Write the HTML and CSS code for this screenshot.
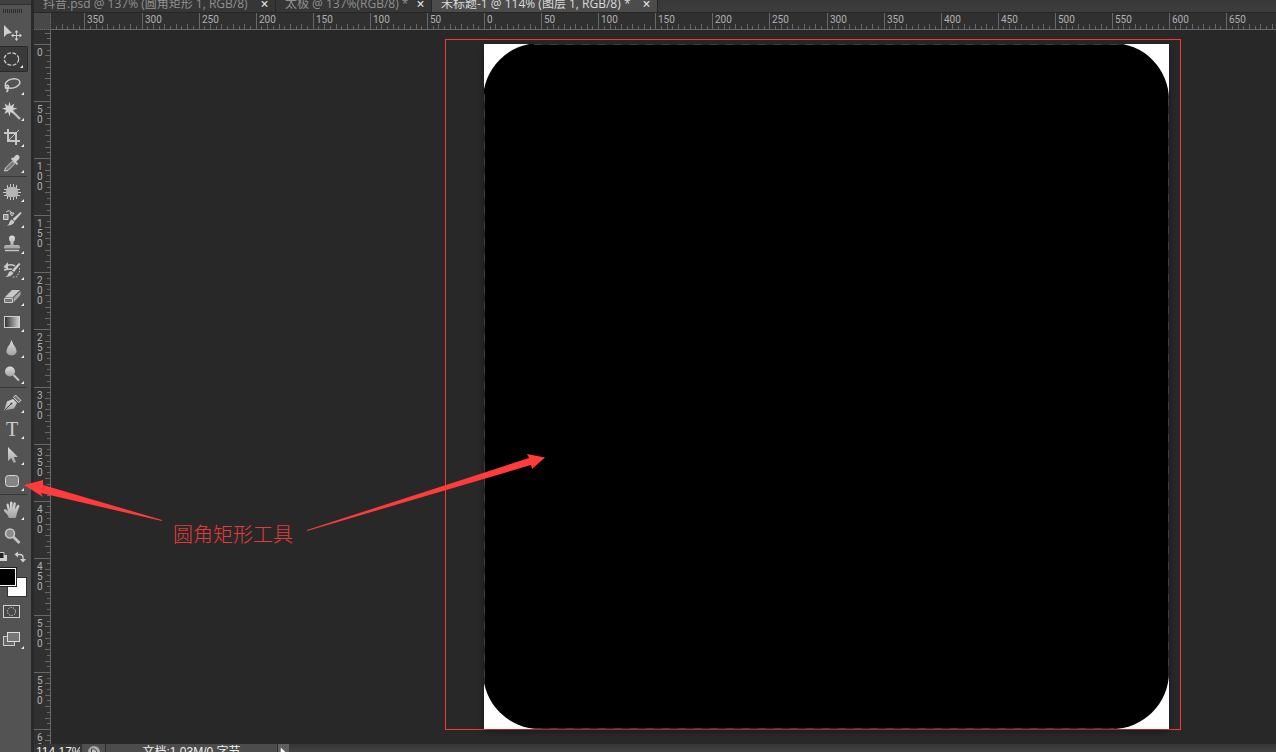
FILE: index.html
```html
<!DOCTYPE html>
<html lang="zh-CN">
<head>
    <meta charset="UTF-8">
    <meta name="viewport" content="width=device-width, initial-scale=1.0">
    <title>未标题-1</title>
    <link rel="stylesheet" href="styles.css">
</head>
<body>

<!-- Shared gradients for the tool icons -->
<svg class="defs" aria-hidden="true">
    <defs>
        <linearGradient id="metal" x1="0" y1="0" x2="0" y2="1">
            <stop offset="0" stop-color="#dedede"/>
            <stop offset="1" stop-color="#a2a2a2"/>
        </linearGradient>
        <linearGradient id="ramp" x1="0" y1="0" x2="1" y2="0">
            <stop offset="0" stop-color="#2c2c2c"/>
            <stop offset="1" stop-color="#d4d4d4"/>
        </linearGradient>
    </defs>
</svg>

<div class="app">
    <!-- Toolbar -->
    <aside class="toolbar">
        <div class="toolbar-head"></div>
        <div class="grip"></div>
        <div class="tool-group">
            <button class="tool plain" aria-label="移动工具"><svg viewBox="0 0 24 24"><path d="M4 4v12l3-3 5-1z" fill="#cfcfcf"/><path d="M16.500 10v9M12 14.500h9" stroke="#cfcfcf"/><path d="M16.500 9l-2 2.500h4zM16.500 20l-2-2.500h4zM11 14.500l2.500-2v4zM22 14.500l-2.500-2v4z" fill="#cfcfcf"/></svg></button>
            <button class="tool selected" aria-label="椭圆选框工具"><svg viewBox="0 0 24 24"><ellipse cx="12" cy="12" rx="7.500" ry="6.500" fill="none" stroke="#d0d0d0" stroke-width="1.300" stroke-dasharray="4 1.600"/></svg></button>
            <button class="tool" aria-label="套索工具"><svg viewBox="0 0 24 24"><g fill="none" stroke="#cdcdcd" stroke-width="1.500"><ellipse cx="12.500" cy="10.500" rx="7.500" ry="4.500" transform="rotate(-14 12.500 10.500)"/><circle cx="7" cy="14" r="1.700"/><path d="M7.500 15.500q1 2-1 3.500"/></g></svg></button>
            <button class="tool" aria-label="魔棒工具"><svg viewBox="0 0 24 24"><path d="M11 11l9 9" stroke="#bcbcbc" stroke-width="2.400"/><path d="M9.500 2.500l1.200 4.500 3.800-2.500-1.500 4 4.500 1-4.500 1.500 1.500 4-4-2-1 4.500-1.400-4.500-3.600 2 1.500-4-4-1.500 4-1-1.500-4 3.800 2.500z" fill="#d2d2d2"/></svg></button>
            <button class="tool" aria-label="裁剪工具"><svg viewBox="0 0 24 24"><path d="M8 4v12h12M4 8h12v12" fill="none" stroke="#c6c6c6" stroke-width="2"/><path d="M8 16L19 5" stroke="#c6c6c6"/></svg></button>
            <button class="tool" aria-label="吸管工具"><svg viewBox="0 0 24 24"><path d="M4.500 20l1-3 7-7 2.500 2.500-7 7z" fill="#777" stroke="#d0d0d0"/><path d="M11 8l6 6 1.200-1.200-2-2 2.800-2.800q1.500-2-.2-3.400-1.600-1.500-3.300 0l-2.600 2.700-1-.7z" fill="#cdcdcd"/></svg></button>
        </div>
        <div class="tool-group">
            <button class="tool" aria-label="修补工具"><svg viewBox="0 0 24 24"><path d="M7.500 5v14M10.500 4v16M13.500 4v16M16.500 5v14M4 9.500h16M3 12.500h18M4 15.500h16" stroke="#c8c8c8"/><rect x="6" y="7" width="12" height="10" rx="4" fill="#b5b5b5"/></svg></button>
            <button class="tool" aria-label="画笔工具"><svg viewBox="0 0 24 24"><path d="M20.500 6l1.200 1-7 8-2-2z" fill="#d0d0d0"/><path d="M12 13.500l2.500 2.200q-1.500 4-7.500 3.800 2.500-1 2.500-3.500 1-2.500 2.500-2.500z" fill="#c8c8c8"/><path d="M3.500 8.500h4.500v5h-4.500z" fill="#8b8b8b" stroke="#d5d5d5"/><path d="M6 6q4-3 6 1.500M10 7h4l-2 3z" fill="none" stroke="#cfcfcf"/></svg></button>
            <button class="tool" aria-label="仿制图章工具"><svg viewBox="0 0 24 24"><path d="M9 6.500a3 3 0 0 1 6 0q0 2-1.500 3.500v3H18q2 0 2 2v1.500H4V15q0-2 2-2h4.500v-3Q9 8.500 9 6.500z" fill="url(#metal)"/><path d="M5 18.500h14" stroke="#c5c5c5" stroke-width="1.500"/></svg></button>
            <button class="tool" aria-label="历史记录画笔工具"><svg viewBox="0 0 24 24"><path d="M19 5l1.500 1-6.500 8-2.200-1.800z" fill="#d0d0d0"/><path d="M11 13l2.500 2q-2 4-8.500 4 3-1 3-3 1-3 3-3z" fill="#c8c8c8"/><path d="M5 8.500q5-3 10-.5M4 12q4-1 8-1" fill="none" stroke="#c8c8c8" stroke-width="1.500"/><path d="M8 4v8L3.500 9z" fill="#c8c8c8"/><path d="M19.500 10v4l-3 5h-4" fill="none" stroke="#c8c8c8" stroke-dasharray="1.500 1.500"/></svg></button>
            <button class="tool" aria-label="橡皮擦工具"><svg viewBox="0 0 24 24"><path d="M4.500 13.500L12 6h8l-7.500 7.500z" fill="#c9c9c9"/><path d="M4.500 14.500h8v4h-8z" fill="#777" stroke="#c9c9c9"/><path d="M13.500 14l7-7v4l-7 7.500z" fill="#a6a6a6"/></svg></button>
            <button class="tool" aria-label="渐变工具"><svg viewBox="0 0 24 24"><rect x="4.500" y="6.500" width="15" height="11" fill="url(#ramp)" stroke="#cfcfcf"/></svg></button>
            <button class="tool" aria-label="模糊工具"><svg viewBox="0 0 24 24"><path d="M11.500 4q1 3.500 4 7.500 3.500 7.500-4 8-7.500-.5-4-8 3-4 4-7.500z" fill="url(#metal)"/></svg></button>
            <button class="tool" aria-label="减淡工具"><svg viewBox="0 0 24 24"><circle cx="10" cy="9.500" r="5" fill="url(#metal)"/><path d="M13.500 13l5.500 5.500" stroke="#c8c8c8" stroke-width="2"/></svg></button>
        </div>
        <div class="tool-group">
            <button class="tool" aria-label="钢笔工具"><svg viewBox="0 0 24 24"><path d="M4 19.500l3-9 6-2.500 4 4-3 5.500z" fill="url(#metal)"/><path d="M5 19l6-6" stroke="#444"/><circle cx="11.500" cy="12.500" r="1" fill="#444"/><path d="M13.500 6.500l2-2.500 5.500 5.500-2.500 2z" fill="#777" stroke="#d0d0d0"/></svg></button>
            <button class="tool" aria-label="横排文字工具"><span class="type-icon">T</span></button>
            <button class="tool" aria-label="路径选择工具"><svg viewBox="0 0 24 24"><path d="M8 4v14l3.300-3 2.400 5 2.300-1-2.300-5H18z" fill="url(#metal)"/></svg></button>
            <button class="tool" aria-label="圆角矩形工具"><svg viewBox="0 0 24 24"><rect x="5.500" y="6.500" width="13" height="11" rx="3" fill="#858585" stroke="#d6d6d6"/></svg></button>
        </div>
        <div class="tool-group last">
            <button class="tool" aria-label="抓手工具"><svg viewBox="0 0 24 24"><path d="M9 20q-1-3-4.500-6.500-1.300-2 .2-2.300Q6.500 11 8 13.500L6.500 7q0-1.500 1-1.500t1.300 1.300L10 11V5q0-1.500 1.200-1.500T12.500 5v6l1-5.500q.3-1.400 1.400-1.200 1 .2.800 1.700L15 11.500l2-3.700q.8-1.300 1.800-.8.9.5.4 1.800L17 15q-.5 3-1.500 5z" fill="url(#metal)"/></svg></button>
            <button class="tool plain" aria-label="缩放工具"><svg viewBox="0 0 24 24"><circle cx="10" cy="9.500" r="4.500" fill="#8b8b8b" stroke="#c9c9c9" stroke-width="1.500"/><path d="M13.500 13l6 6" stroke="#c6c6c6" stroke-width="2.600"/></svg></button>
        </div>
        <div class="color-actions">
            <button aria-label="默认前景色和背景色"><svg width="8" height="12" viewBox="0 0 8 12"><path d="M0 4h7v6H0z" fill="#d0d0d0"/><path d="M0 1h4v6H0z" fill="#222"/><path d="M0 1.500h4v6H0" fill="none" stroke="#ccc"/></svg></button>
            <button aria-label="切换前景色和背景色"><svg width="12" height="12" viewBox="0 0 12 12"><path d="M3 3.500h3q3 0 3 3v2" fill="none" stroke="#cfcfcf" stroke-width="1.300"/><path d="M4 .5v6l-3.500-3zM6 8h6l-3 3.500z" fill="#cfcfcf"/></svg></button>
        </div>
        <div class="swatches">
            <button class="swatch back" aria-label="背景色"></button>
            <button class="swatch front" aria-label="前景色"></button>
        </div>
        <button class="tool plain mask" aria-label="快速蒙版"><svg viewBox="0 0 24 24"><rect x="3.500" y="6.500" width="16" height="12" fill="#484848" stroke="#d2d2d2"/><circle cx="11.500" cy="12.500" r="4" fill="none" stroke="#fff" stroke-dasharray="1 1.500"/></svg></button>
        <button class="tool" aria-label="屏幕模式"><svg viewBox="0 0 24 24"><rect x="3.500" y="9.500" width="11" height="9" fill="#666" stroke="#ccc"/><rect x="7.500" y="5.500" width="12" height="9" fill="#777" stroke="#ddd"/></svg></button>
    </aside>

    <main class="editor">
        <!-- Document tabs -->
        <nav class="tabs">
            <div class="tab first"><span>抖音.psd @ 137% (圆角矩形 1, RGB/8)</span><button aria-label="关闭">×</button></div>
            <div class="tab second"><span>太极 @ 137%(RGB/8) *</span><button aria-label="关闭">×</button></div>
            <div class="tab third active"><span>未标题-1 @ 114% (图层 1, RGB/8) *</span><button aria-label="关闭">×</button></div>
        </nav>

        <!-- Rulers -->
        <div class="ruler-row">
            <div class="ruler-corner"></div>
            <svg class="ruler-top" id="rulerTop"></svg>
        </div>
        <div class="work-row">
            <svg class="ruler-side" id="rulerSide"></svg>
            <div class="pasteboard">
                <div class="frame">
                    <svg class="artboard" viewBox="0 0 685 685">
                        <rect width="685" height="685" fill="#fff"/>
                        <rect x="-1" y="-1" width="686" height="686" rx="57" fill="#000"/>
                        <path d="M50 .5H640M50 684.500H630M.5 50V640M684.500 54V630" fill="none" stroke="#262626"/>
                        <path d="M50 .5H640M50 684.500H630M.5 50V640M684.500 54V630" fill="none" stroke="#404040" stroke-dasharray="8 8"/>
                    </svg>
                </div>
            </div>
        </div>

        <!-- Status bar -->
        <footer class="status">
            <input class="zoom" aria-label="缩放" value="114.17%">
            <button class="preview" aria-label="预览"><svg width="14" height="14" viewBox="0 0 14 14"><circle cx="7" cy="7" r="6" fill="#aaa"/><path d="M4.500 4h3l2 2v5h-5z" fill="#bbb" stroke="#444"/></svg></button>
            <div class="info">文档:1.03M/0 字节</div>
            <button class="more" aria-label="更多"><svg width="12" height="12" viewBox="0 0 12 12"><path d="M3 1v10l5-5z" fill="#fff"/></svg></button>
        </footer>
    </main>

    <!-- Callout -->
    <svg class="arrows" width="560" height="560" viewBox="0 0 560 560" aria-hidden="true">
        <path d="M24 485l19-5v5l119 35v1L41 493l2 4z" fill="#ff3b3b"/>
        <path d="M307 530L529 458l-2-4 18 3.500-13 11.500-1-4L307 531z" fill="#ff3b3b"/>
    </svg>
    <div class="callout">圆角矩形工具</div>
</div>

<script src="script.js"></script>
</body>
</html>
```
FILE: styles.css
```css
* {
    box-sizing: border-box;
}
body {
    margin: 0;
    background-color: #282828;
    font-family: "Open Sans", "Noto Sans CJK SC", sans-serif;
    font-size: 12px;
    color: #d8d8d8;
    overflow: hidden;
}
button {
    display: flex;
    align-items: center;
    justify-content: center;
    padding: 0;
    border: none;
    background: none;
    color: inherit;
    font: inherit;
}
.defs {
    position: absolute;
    width: 0;
    height: 0;
}
.app {
    position: relative;
    display: flex;
    height: 100vh;
}

/* Toolbar */
.toolbar {
    flex: 0 0 34px;
    background-color: #535353;
    border-right: 3px solid #292929;
    overflow: hidden;
}
.toolbar-head {
    height: 5px;
    background-color: #404040;
    border-bottom: 1px solid #303030;
}
.grip {
    width: 20px;
    height: 4px;
    margin: 4px 0 7px 3px;
    background: repeating-linear-gradient(90deg, #2c2c2c 0 1px, #535353 1px 2px);
}
.tool-group {
    width: 27px;
    margin-bottom: 2px;
    border-bottom: 1px solid #383838;
}
.tool-group.last {
    margin-bottom: 0;
    border-bottom-color: transparent;
}
.tool {
    position: relative;
    width: 28px;
    height: 26px;
    padding-right: 4px;
}
.tool svg {
    width: 24px;
    height: 24px;
}
.tool::after {
    content: "";
    position: absolute;
    right: 4px;
    bottom: 3px;
    border-left: 3px solid transparent;
    border-bottom: 3px solid #eee;
}
.tool.plain::after {
    display: none;
}
.tool.selected {
    background-color: #3a3a3a;
    border: 1px solid #2a2a2a;
    border-left: none;
    border-radius: 0 2px 2px 0;
}
.type-icon {
    font-family: "Liberation Serif", serif;
    font-size: 20px;
    line-height: 24px;
    color: #cdcdcd;
}
.color-actions {
    display: flex;
    justify-content: space-between;
    width: 26px;
    height: 14px;
    margin-bottom: 4px;
}
.swatches {
    position: relative;
    height: 30px;
}
.swatch {
    position: absolute;
    width: 20px;
    height: 20px;
    border: 1px solid #333;
}
.swatch.back {
    left: 7px;
    top: 9px;
    background-color: #fff;
}
.swatch.front {
    left: 0;
    top: 0;
    width: 16px;
    height: 18px;
    background-color: #000;
    border: 1px solid #fff;
    border-left: none;
    outline: 1px solid #222;
}
.mask {
    margin-bottom: 2px;
}

/* Tabs */
.editor {
    flex: 1;
    min-width: 0;
    display: flex;
    flex-direction: column;
}
.tabs {
    display: flex;
    align-items: flex-end;
    flex: 0 0 13px;
    overflow: hidden;
    background: linear-gradient(#383838, #3d3d3d);
    border-bottom: 1px solid #262626;
}
.tab {
    display: flex;
    align-items: center;
    justify-content: space-between;
    height: 17px;
    padding: 0 6px 0 9px;
    background-color: #363636;
    border-right: 1px solid #262626;
    color: #919191;
    line-height: 16px;
    white-space: nowrap;
}
.tab button {
    width: 9px;
    font-size: 14px;
    font-weight: 600;
    color: #ddd;
}
.tab.first {
    width: 242px;
}
.tab.second {
    width: 156px;
}
.tab.third {
    width: 226px;
}
.tab.active {
    background-color: #4c4c4c;
    color: #dcdcdc;
}

/* Rulers */
.ruler-row {
    display: flex;
    flex: 0 0 17px;
}
.ruler-corner {
    width: 17px;
    background-color: #484848;
    border-right: 1px dotted #6a6a6a;
    border-bottom: 1px dotted #6a6a6a;
}
.ruler-top {
    flex: 1;
    height: 17px;
    background-color: #303030;
    border-bottom: 1px solid #686868;
}
.work-row {
    flex: 1;
    min-height: 0;
    display: flex;
}
.ruler-side {
    flex: 0 0 17px;
    width: 17px;
    height: 100%;
    background-color: #303030;
    border-right: 1px solid #686868;
}
.ruler-top line, .ruler-side line {
    stroke: #686868;
    shape-rendering: crispEdges;
}
.ruler-top text, .ruler-side text {
    font-family: Roboto, sans-serif;
    font-size: 10px;
    fill: #b0b0b0;
}

/* Canvas */
.pasteboard {
    flex: 1;
    min-width: 0;
    padding: 9px 0 0 394px;
    overflow: hidden;
}
.frame {
    width: max-content;
    padding: 4px 11px 0 38px;
    border: 1px solid #fb3535;
}
.artboard {
    display: block;
    width: 685px;
    height: 685px;
    box-shadow: 0 2px 6px rgba(0, 0, 0, 0.4);
}

/* Status bar */
.status {
    display: flex;
    align-items: flex-start;
    flex: 0 0 8px;
    overflow: hidden;
    background: linear-gradient(#353535, #424242);
    font-family: "Liberation Sans", "Noto Sans CJK SC", sans-serif;
    color: #f0f0f0;
}
.status > * {
    height: 16px;
}
.zoom {
    width: 48px;
    padding: 0 2px;
    border: none;
    background-color: #353535;
    color: inherit;
    font: inherit;
}
.preview {
    width: 24px;
    border-right: 1px solid #303030;
    background-color: #505050;
}
.info {
    width: 171px;
    background-color: #4c4c4c;
    text-align: center;
    line-height: 16px;
}
.more {
    width: 12px;
    border-left: 1px solid #303030;
    background-color: #606060;
}

/* Callout */
.arrows {
    position: absolute;
    left: 0;
    top: 0;
    pointer-events: none;
}
.callout {
    position: absolute;
    left: 173px;
    top: 522px;
    font-family: "Noto Sans CJK SC", sans-serif;
    font-size: 20px;
    font-weight: 300;
    line-height: 24px;
    color: #e63a3a;
}
```
FILE: script.js
```js
// Document zoom and where the artboard starts along each ruler
const scale = 685 / 600;
const originX = 433;
const originY = 14;
const NS = 'http://www.w3.org/2000/svg';

function addLine(parent, x1, y1, x2, y2) {
    const line = document.createElementNS(NS, 'line');
    line.setAttribute('x1', x1);
    line.setAttribute('y1', y1);
    line.setAttribute('x2', x2);
    line.setAttribute('y2', y2);
    parent.appendChild(line);
}

function addText(parent, x, y, value) {
    const text = document.createElementNS(NS, 'text');
    text.setAttribute('x', x);
    text.setAttribute('y', y);
    text.textContent = value;
    parent.appendChild(text);
}

function drawRulers() {
    const rulerTop = document.getElementById('rulerTop');
    const rulerSide = document.getElementById('rulerSide');
    const width = rulerTop.clientWidth;
    const height = rulerSide.clientHeight;
    rulerTop.innerHTML = '';
    rulerSide.innerHTML = '';

    for (let unit = -375; originX + unit * scale < width; unit += 5) {
        const x = Math.round(originX + unit * scale) + 0.5;
        const start = unit % 50 === 0 ? 0 : unit % 10 === 0 ? 11 : 13;
        addLine(rulerTop, x, start, x, 17);
        if (unit % 50 === 0) addText(rulerTop, x + 2.5, 10, Math.abs(unit));
    }

    for (let unit = -10; originY + unit * scale < height; unit += 5) {
        const y = Math.round(originY + unit * scale) + 0.5;
        const start = unit % 50 === 0 ? 0 : unit % 10 === 0 ? 11 : 13;
        addLine(rulerSide, start, y, 17, y);
        if (unit % 50 === 0) {
            String(Math.abs(unit)).split('').forEach((digit, i) => {
                addText(rulerSide, 3, y + 11.5 + i * 10, digit);
            });
        }
    }
}

drawRulers();
window.addEventListener('resize', drawRulers);
```
